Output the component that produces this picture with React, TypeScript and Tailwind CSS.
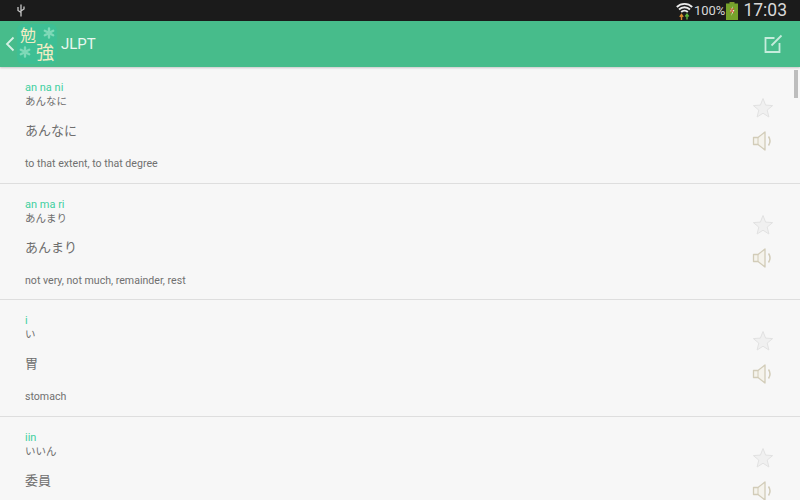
const items = [
  { r: "an na ni", k: "あんなに", w: "あんなに", m: "to that extent, to that degree" },
  { r: "an ma ri", k: "あんまり", w: "あんまり", m: "not very, not much, remainder, rest" },
  { r: "i", k: "い", w: "胃", m: "stomach" },
  { r: "iin", k: "いいん", w: "委員", m: "" },
];

function Star() {
  return (
    <svg width="22" height="22" viewBox="0 0 22 22" className="block">
      <path d="M11 1.500l2.600 6.600 7 .5-5.400 4.500 1.700 6.900-5.900-3.800-5.900 3.800 1.700-6.900L1.400 8.600l7-.5z" fill="#f0f0f0" stroke="#e2e2e2" strokeWidth="1" />
    </svg>
  );
}

function Speaker() {
  return (
    <svg width="22" height="22" viewBox="0 0 22 22" fill="none" className="block">
      <path d="M1.500 7.500h4.500L13 2v18l-7-5.500H1.500z" fill="#f5f3ec" stroke="#d2ccb8" strokeWidth="1.300" strokeLinejoin="round" />
      <path d="M6 7.500v7" stroke="#d2ccb8" strokeWidth="1" />
      <path d="M16.500 6.500c1.900 2.800 1.900 6.200 0 9" stroke="#d2ccb8" strokeWidth="1.500" />
    </svg>
  );
}

function Flower() {
  return (
    <svg width="12" height="12" viewBox="0 0 12 12" fill="none" stroke="#7fd9b8" strokeWidth="2.400" strokeLinecap="round">
      <path d="M6 1.500v3.200M6 7.300v3.200M1.800 3.800l2.900 1.500M7.300 6.700l2.900 1.500M10.200 3.800L7.300 5.300M4.700 6.700L1.800 8.200" />
    </svg>
  );
}

export default function App() {
  return (
    <div className="relative w-[800px] h-[500px] overflow-hidden bg-[#f7f7f7] font-['Roboto','Noto_Sans_CJK_JP',sans-serif]">
      <div className="h-[21px] bg-[#1b1b1b] flex items-center justify-between pl-[17px] pr-[13px]">
        <svg width="8" height="13" viewBox="0 0 8 13" fill="none" stroke="#c8c8c8" strokeWidth="1.300">
          <path d="M4 0.500v12M1 3v3.500l3 2M7 2.500v2.500l-3 2" />
        </svg>
        <div className="flex items-center">
          <svg width="17" height="18" viewBox="0 0 17 18" fill="none" className="mr-[1px]">
            <path d="M0.800 5c4.300-4.300 11.100-4.300 15.400 0M3 7.500c3.100-3 7.900-3 11 0M5.200 10c1.800-1.700 4.800-1.700 6.600 0" stroke="#ececec" strokeWidth="1.800" />
            <path d="M5.500 18v-5M3.800 14.800l1.700-2.300 1.700 2.300" stroke="#d98a2b" strokeWidth="1.400" />
            <path d="M11 12v5.500M9.300 14.500l1.700-2.300 1.700 2.300" stroke="#5fb53a" strokeWidth="1.400" />
          </svg>
          <span className="text-[13px] leading-[21px] text-[#d8d8d8]">100%</span>
          <svg width="12" height="18" viewBox="0 0 12 18" className="ml-[1px]">
            <rect x="3.500" y="0" width="5" height="2" fill="#7d9a2e" />
            <rect x="0" y="1.500" width="12" height="16.500" fill="#76a32b" />
            <path d="M7 4L4 9.500h2.500L5 14l3.500-6H6z" fill="#f4e9d8" />
            <path d="M4 6l4 5M8 6l-4 5" stroke="#d9503a" strokeWidth="1" />
          </svg>
          <span className="ml-[5px] text-[17.500px] leading-[21px] text-[#d8d8d8]">17:03</span>
        </div>
      </div>

      <div className="relative z-10 h-[46px] bg-[#47bc8b] flex items-center shadow-[0_1px_2px_rgba(0,0,0,0.2)]">
        <svg width="10" height="16" viewBox="0 0 10 16" fill="none" stroke="#d6f1e5" strokeWidth="1.800" className="ml-[5px]">
          <path d="M8.500 1.500L2 8l6.500 6.500" />
        </svg>
        <div className="relative ml-[2px] w-[40px] h-[40px] bg-[#3ebf94] rounded-[6px]">
          <span className="absolute left-[3px] top-[3px] text-[16px] leading-[18px] text-[#f2ecc4]">勉</span>
          <span className="absolute left-[19px] top-[19px] text-[18px] leading-[20px] text-[#f2ecc4]">強</span>
          <span className="absolute left-[26px] top-[3px] leading-none"><Flower /></span>
          <span className="absolute left-[2px] top-[22px] leading-none"><Flower /></span>
        </div>
        <span className="ml-[4px] mt-[1px] text-[15px] text-[#e8f7f0]">JLPT</span>
        <div className="ml-auto mr-[17px] -mt-[2px]">
          <svg width="19" height="19" viewBox="0 0 19 19" fill="none" stroke="#c6ecdc" strokeWidth="1.800">
            <path d="M10.500 4H1.500v14h14V9" />
            <path d="M7.500 11.500L17.500 1.500" />
          </svg>
        </div>
      </div>

      <div className="relative">
        {items.map((it) => (
          <div key={it.r} className="h-[116.500px] border-b border-[#dedede] pl-[25px] pr-[26px] flex justify-between">
            <div className="pt-[14px]">
              <div className="text-[11px] leading-[14px] text-[#3fd0a0]">{it.r}</div>
              <div className="text-[10.500px] leading-[14px] text-[#6e6e6e]">{it.k}</div>
              <div className="text-[13px] leading-[18px] mt-[13px] text-[#6e6e6e]">{it.w}</div>
              <div className="text-[10.600px] leading-[14px] mt-[17px] text-[#707070]">{it.m}</div>
            </div>
            <div className="pt-[30px] flex flex-col gap-[11px]">
              <Star />
              <Speaker />
            </div>
          </div>
        ))}
        <div className="absolute right-[2px] top-[3px] w-[4px] h-[28px] bg-[#bdbdbd]" />
      </div>
    </div>
  );
}
